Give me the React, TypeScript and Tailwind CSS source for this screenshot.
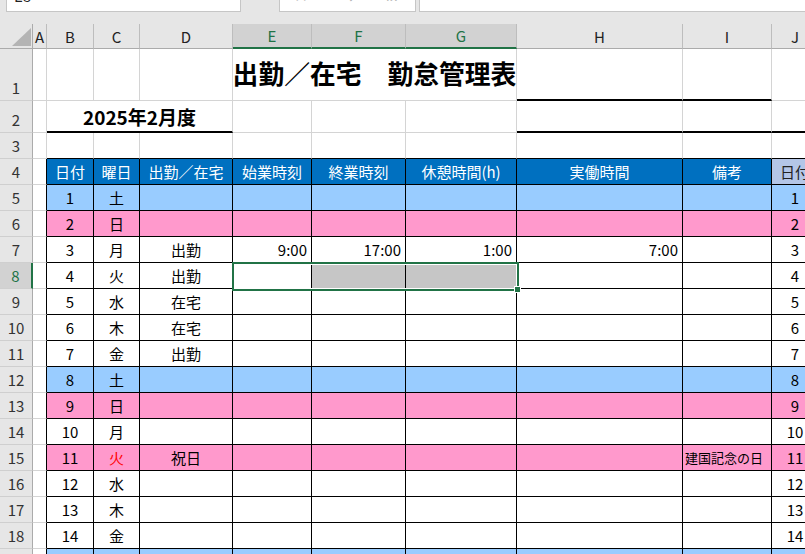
import React from "react";

const GRID =
  "grid grid-cols-[33px_14px_47px_46px_93px_79px_94px_111px_166px_89px_47px] w-[819px]";

function RowHead({ n, selected }: { n: number; selected?: boolean }) {
  return (
    <div
      className={
        selected
          ? "flex items-end justify-center bg-[#d2d2d2] border-b border-b-[#cfcfcf] border-r-2 border-r-[#217346] text-[#217346]"
          : "flex items-end justify-center bg-[#e6e6e6] border-b border-b-[#cfcfcf] border-r border-r-[#ababab] text-[#333]"
      }
    >
      <span className="h-[25px] flex items-center text-[15px] leading-none">{n}</span>
    </div>
  );
}

function Cell({
  className = "",
  children,
  align = "c",
}: {
  className?: string;
  children?: React.ReactNode;
  align?: "c" | "r" | "l";
}) {
  const j =
    align === "c"
      ? "justify-center"
      : align === "r"
      ? "justify-end pr-[4px]"
      : "justify-start pl-[2px]";
  return (
    <div className={`flex items-center whitespace-nowrap overflow-visible ${j} ${className}`}>
      {children}
    </div>
  );
}

const GREY = "border-r border-b border-r-[#d4d4d4] border-b-[#d4d4d4]";

type Kind = "sat" | "sun" | "week";
type DayRow = {
  row: number;
  d: number;
  w: string;
  kind: Kind;
  red?: boolean;
  att?: string;
  e?: string;
  f?: string;
  g?: string;
  h?: string;
  i?: string;
};

const rows: DayRow[] = [
  { row: 5, d: 1, w: "土", kind: "sat" },
  { row: 6, d: 2, w: "日", kind: "sun" },
  { row: 7, d: 3, w: "月", kind: "week", att: "出勤", e: "9:00", f: "17:00", g: "1:00", h: "7:00" },
  { row: 8, d: 4, w: "火", kind: "week", att: "出勤" },
  { row: 9, d: 5, w: "水", kind: "week", att: "在宅" },
  { row: 10, d: 6, w: "木", kind: "week", att: "在宅" },
  { row: 11, d: 7, w: "金", kind: "week", att: "出勤" },
  { row: 12, d: 8, w: "土", kind: "sat" },
  { row: 13, d: 9, w: "日", kind: "sun" },
  { row: 14, d: 10, w: "月", kind: "week" },
  { row: 15, d: 11, w: "火", kind: "sun", red: true, att: "祝日", i: "建国記念の日" },
  { row: 16, d: 12, w: "水", kind: "week" },
  { row: 17, d: 13, w: "木", kind: "week" },
  { row: 18, d: 14, w: "金", kind: "week" },
  { row: 19, d: 15, w: "土", kind: "sat" },
];

const TB = "border-r border-b border-black";

function DataRow({ r }: { r: DayRow }) {
  const bg =
    r.kind === "sat" ? "bg-[#99ccff]" : r.kind === "sun" ? "bg-[#ff99cc]" : "bg-white";
  const sel = r.row === 8 ? "bg-[#c6c6c6]" : bg;
  return (
    <div className={`${GRID} h-[26px] text-[15px] leading-none text-black`}>
      <RowHead n={r.row} selected={r.row === 8} />
      <div className="border-r border-r-black border-b border-b-[#d4d4d4] bg-white" />
      <Cell className={`${TB} ${bg}`}>{r.d}</Cell>
      <Cell className={`${TB} ${bg} ${r.red ? "text-[#ff0000]" : ""}`}>{r.w}</Cell>
      <Cell className={`${TB} ${bg}`}>{r.att}</Cell>
      <Cell align="r" className={`${TB} ${bg}`}>{r.e}</Cell>
      <Cell align="r" className={`${TB} ${sel}`}>{r.f}</Cell>
      <Cell align="r" className={`${TB} ${sel}`}>{r.g}</Cell>
      <Cell align="r" className={`${TB} ${bg}`}>{r.h}</Cell>
      <Cell align="l" className={`${TB} ${bg} text-[13px]`}>{r.i}</Cell>
      <Cell className={`${TB} ${bg}`}>{r.d}</Cell>
    </div>
  );
}

const letters = ["A", "B", "C", "D", "E", "F", "G", "H", "I", "J"];

export default function App() {
  return (
    <div className="relative w-[805px] h-[554px] overflow-hidden bg-white font-['Noto_Sans_CJK_JP','Noto_Sans',sans-serif]">
      {/* formula bar strip */}
      <div className="h-[24px] bg-[#e6e6e6] flex items-start">
        <div className="ml-[6px] w-[235px] h-[12px] bg-white border border-t-0 border-[#c6c6c6] overflow-hidden">
          <div className="-mt-[12px] ml-[7px] text-[15px] leading-none text-[#222]">E8</div>
        </div>
        <div className="ml-[38px] w-[137px] h-[12px] bg-white border border-t-0 border-[#c6c6c6] overflow-hidden flex text-[#b8b8b8] text-[14px] leading-none">
          <span className="-mt-[12px] ml-[14px]">×</span>
          <span className="-mt-[12px] ml-[40px]">✓</span>
          <span className="-mt-[12px] ml-[28px] italic">fx</span>
        </div>
        <div className="ml-[3px] flex-1 h-[12px] bg-white border border-t-0 border-r-0 border-[#c6c6c6]" />
      </div>

      {/* column headers */}
      <div className={`${GRID} h-[25px] bg-[#e6e6e6] text-[15px] leading-none text-[#222]`}>
        <div className="flex items-end justify-end pr-[1px] pb-[2px] border-r border-b border-r-[#ababab] border-b-[#ababab]">
          <svg width="19" height="18" viewBox="0 0 19 18">
            <polygon points="19,0 19,18 0,18" fill="#b4b4b4" />
          </svg>
        </div>
        {letters.map((l) =>
          l === "E" || l === "F" || l === "G" ? (
            <div
              key={l}
              className="flex items-center justify-center bg-[#d2d2d2] text-[#217346] border-r border-r-[#bdbdbd] border-b-2 border-b-[#217346]"
            >
              {l}
            </div>
          ) : (
            <div
              key={l}
              className="flex items-center justify-center border-r border-r-[#bdbdbd] border-b border-b-[#ababab]"
            >
              {l}
            </div>
          )
        )}
      </div>

      {/* row 1 */}
      <div className={`${GRID} h-[52px] text-black`}>
        <RowHead n={1} />
        <div className={GREY} />
        <div className={GREY} />
        <div className={GREY} />
        <div className={GREY} />
        <div className={`col-span-3 ${GREY} flex items-center justify-center pb-[3px] whitespace-nowrap font-bold text-[25.8px] leading-none`}>
          出勤／在宅　勤怠管理表
        </div>
        <div className="border-r border-r-[#d4d4d4] border-b-2 border-b-black" />
        <div className="border-r border-r-[#d4d4d4] border-b-2 border-b-black" />
        <div className={GREY} />
      </div>

      {/* row 2 */}
      <div className={`${GRID} h-[32px] text-black`}>
        <RowHead n={2} />
        <div className={GREY} />
        <div className="col-span-3 flex items-center justify-center border-r border-r-[#d4d4d4] border-b-2 border-b-black font-bold text-[19px] leading-none whitespace-nowrap">
          2025年2月度
        </div>
        <div className={GREY} />
        <div className={GREY} />
        <div className={GREY} />
        <div className="border-r border-r-[#d4d4d4] border-b-2 border-b-black" />
        <div className="border-r border-r-[#d4d4d4] border-b-2 border-b-black" />
        <div className="border-r border-r-[#d4d4d4] border-b-2 border-b-black" />
      </div>

      {/* row 3 */}
      <div className={`${GRID} h-[26px]`}>
        <RowHead n={3} />
        <div className={GREY} />
        {[0, 1, 2, 3, 4, 5, 6, 7, 8].map((k) => (
          <div key={k} className="border-r border-r-[#d4d4d4] border-b border-b-black" />
        ))}
      </div>

      {/* row 4 header */}
      <div className={`${GRID} h-[26px] text-[15px] leading-none`}>
        <RowHead n={4} />
        <div className="border-r border-r-black border-b border-b-[#d4d4d4]" />
        {["日付", "曜日", "出勤／在宅", "始業時刻", "終業時刻", "休憩時間(h)", "実働時間", "備考"].map((t) => (
          <Cell key={t} className={`${TB} bg-[#0070c0] text-white`}>
            {t}
          </Cell>
        ))}
        <Cell className={`${TB} bg-[#b4c6e7] text-[#222]`}>日付</Cell>
      </div>

      {rows.map((r) => (
        <DataRow key={r.row} r={r} />
      ))}

      {/* selection overlay */}
      <div className="absolute left-[232px] top-[262px] w-[287px] h-[29px] border-2 border-[#217346] shadow-[inset_0_0_0_1px_#ffffff] pointer-events-none" />
      <div className="absolute left-[514px] top-[286px] w-[7px] h-[7px] bg-[#217346] border border-white" />
    </div>
  );
}
